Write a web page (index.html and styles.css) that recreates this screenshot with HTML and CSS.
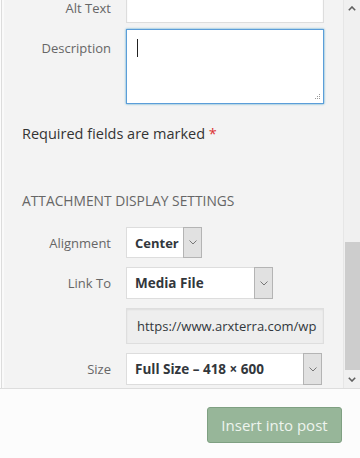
FILE: index.html
```html
<!DOCTYPE html>
<html lang="en">
<head>
  <meta charset="UTF-8" />
  <meta name="viewport" content="width=device-width, initial-scale=1.0"/>
  <title>Attachment Details</title>
  <link rel="stylesheet" href="styles.css">
</head>
<body>

<div class="frame">
  <div class="settings">
    <div class="settings-inner">

      <div class="setting">
        <span class="name">Alt Text</span>
        <span class="field input alt"></span>
      </div>

      <div class="setting">
        <span class="name desc-name">Description</span>
        <span class="field textarea">
          <span class="caret"></span>
          <svg class="grip" width="7" height="7" viewBox="0 0 7 7">
            <rect x="5" y="0" width="1" height="1" fill="#999"/>
            <rect x="3" y="2" width="1" height="1" fill="#999"/>
            <rect x="5" y="2" width="1" height="1" fill="#999"/>
            <rect x="1" y="4" width="1" height="1" fill="#999"/>
            <rect x="3" y="4" width="1" height="1" fill="#999"/>
            <rect x="5" y="4" width="1" height="1" fill="#999"/>
          </svg>
        </span>
      </div>

      <p class="required">Required fields are marked <span class="star">*</span></p>

      <h2 class="section-title">Attachment Display Settings</h2>

      <div class="setting centered first">
        <span class="name">Alignment</span>
        <span class="field select sel-align">
          <span class="select-value">Center</span>
          <span class="select-arrow">
            <svg width="8" height="5" viewBox="0 0 8 5"><path d="M0.5 0.5 L4 4 L7.5 0.5" fill="none" stroke="#777" stroke-width="1"/></svg>
          </span>
        </span>
      </div>

      <div class="setting centered">
        <span class="name">Link To</span>
        <span class="field select sel-link">
          <span class="select-value">Media File</span>
          <span class="select-arrow">
            <svg width="8" height="5" viewBox="0 0 8 5"><path d="M0.5 0.5 L4 4 L7.5 0.5" fill="none" stroke="#777" stroke-width="1"/></svg>
          </span>
        </span>
      </div>

      <div class="setting centered">
        <span class="name"></span>
        <span class="field input url">https://www.arxterra.com/wp</span>
      </div>

      <div class="setting centered">
        <span class="name">Size</span>
        <span class="field select sel-size">
          <span class="select-value">Full Size – 418 × 600</span>
          <span class="select-arrow">
            <svg width="8" height="5" viewBox="0 0 8 5"><path d="M0.5 0.5 L4 4 L7.5 0.5" fill="none" stroke="#777" stroke-width="1"/></svg>
          </span>
        </span>
      </div>

    </div>
  </div>

  <div class="scrollbar">
    <div class="sb-btn">
      <svg width="8" height="5" viewBox="0 0 8 5"><path d="M0.8 4.2 L4 1 L7.2 4.2" fill="none" stroke="#606060" stroke-width="1.6"/></svg>
    </div>
    <div class="sb-track">
      <div class="sb-thumb"></div>
    </div>
    <div class="sb-btn">
      <svg width="8" height="5" viewBox="0 0 8 5"><path d="M0.8 0.8 L4 4 L7.2 0.8" fill="none" stroke="#606060" stroke-width="1.6"/></svg>
    </div>
  </div>
</div>

<div class="toolbar">
  <button class="button-primary" disabled>Insert into post</button>
</div>

</body>
</html>
```

FILE: styles.css
```css
body {
  margin: 0;
  background: #fcfcfc;
  font-family: 'Open Sans', 'Noto Sans', sans-serif;
  color: #444;
  width: 360px;
  height: 458px;
  overflow: hidden;
}

.frame {
  display: flex;
  height: 388px;
  border-bottom: 1px solid #dddddd;
  overflow: hidden;
}

.settings {
  flex: 1;
  background: #f3f3f3;
  border-left: 1px solid #dcdcdc;
  margin-left: 1px;
  box-shadow: inset 2px 0 0 #f9f9f9;
  overflow: hidden;
}

.settings-inner {
  margin-top: -10px;
}

.setting {
  display: flex;
  align-items: flex-start;
  margin-bottom: 6px;
}

.setting.centered {
  align-items: center;
  margin-bottom: 9px;
}

.setting.first {
  margin-top: 16px;
}

.name {
  width: 124px;
  box-sizing: border-box;
  padding: 8px 15px 0 0;
  text-align: right;
  font-size: 13px;
  line-height: 20px;
  color: #666;
}

.setting.centered .name {
  padding-top: 0;
}

.desc-name {
  padding-top: 9px;
}

.field {
  display: block;
  box-sizing: border-box;
  background: #fff;
  border: 1px solid #dddddd;
  box-shadow: inset 0 1px 2px rgba(0,0,0,0.07);
}

.input.alt {
  width: 198px;
  height: 33px;
}

.textarea {
  position: relative;
  width: 198px;
  height: 75px;
  border-color: #5b9dd9;
  box-shadow: 0 0 2px rgba(30,140,190,0.8);
}

.caret {
  position: absolute;
  left: 10px;
  top: 9px;
  width: 1px;
  height: 18px;
  background: #222;
}

.grip {
  position: absolute;
  right: 2px;
  bottom: 2px;
}

.required {
  margin: 19px 0 0 20px;
  font-size: 14.5px;
  line-height: 22px;
  color: #333;
}

.star {
  color: #dc3232;
}

.section-title {
  margin: 46px 0 0 20px;
  font-size: 13.8px;
  font-weight: normal;
  line-height: 20px;
  text-transform: uppercase;
  color: #666;
}

.select {
  display: flex;
  height: 32px;
  box-shadow: none;
}

.select-value {
  flex: 1;
  padding-left: 8px;
  font-size: 13.5px;
  font-weight: bold;
  line-height: 30px;
  color: #32373c;
  white-space: nowrap;
  overflow: hidden;
}

.sel-align .select-value {
  font-size: 13px;
}

.select-arrow {
  width: 17px;
  margin: -1px -1px -1px 0;
  background: #e1e1e1;
  border: 1px solid #b4b4b4;
  display: flex;
  align-items: center;
  justify-content: center;
}

.sel-align {
  width: 76px;
  height: 31px;
}

.sel-link {
  width: 147px;
}

.sel-size {
  width: 196px;
}

.input.url {
  width: 198px;
  height: 36px;
  padding: 0 10px;
  background: #eeeeee;
  border-color: #dedede;
  font-size: 13px;
  line-height: 34px;
  color: #32373c;
  white-space: nowrap;
  overflow: hidden;
}

.scrollbar {
  width: 16px;
  background: #f0f0f0;
  border-left: 1px solid #e6e6e6;
  display: flex;
  flex-direction: column;
}

.sb-btn {
  height: 17px;
  display: flex;
  align-items: center;
  justify-content: center;
}

.sb-track {
  flex: 1;
}

.sb-thumb {
  margin: 225px 0 0 1px;
  height: 128px;
  background: #cdcdcd;
}

.toolbar {
  display: flex;
  justify-content: flex-end;
  padding: 18px 18px 0 0;
}

.button-primary {
  width: 135px;
  height: 36px;
  background: #97b699;
  border: 1px solid #7fa082;
  border-radius: 3px;
  color: #eef4ee;
  font-family: 'Open Sans', 'Noto Sans', sans-serif;
  font-size: 15px;
  padding: 0;
}
```
